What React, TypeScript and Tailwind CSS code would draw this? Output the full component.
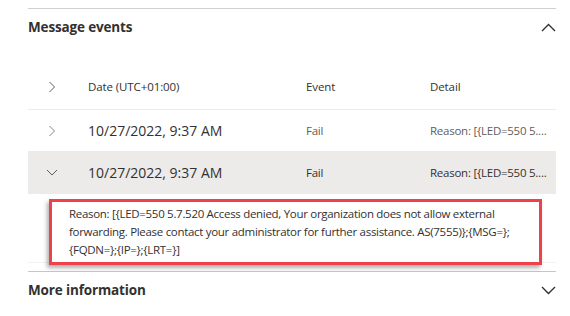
import React from 'react';

const font = { fontFamily: '"Open Sans", "Noto Sans", sans-serif' };

const ChevronRight = ({ className }: { className?: string }) => (
    <svg width="8" height="12" viewBox="0 0 8 12" className={className}>
        <polyline points="1.5,1 6.5,6 1.5,11" fill="none" stroke="currentColor" strokeWidth="1" />
    </svg>
);

const ChevronDown = ({ className }: { className?: string }) => (
    <svg width="12" height="7" viewBox="0 0 12 7" className={className}>
        <polyline points="1,1 6,6 11,1" fill="none" stroke="currentColor" strokeWidth="1" />
    </svg>
);

const BigChevron = ({ up }: { up?: boolean }) => (
    <svg width="15" height="9" viewBox="0 0 15 9" className="text-[#323130]">
        <polyline
            points={up ? '1,8 7.5,1.5 14,8' : '1,1 7.5,7.5 14,1'}
            fill="none"
            stroke="currentColor"
            strokeWidth="1.4"
        />
    </svg>
);

const App: React.FC = () => {
    return (
        <div className="w-[570px] h-[316px] bg-white overflow-hidden pt-2 pl-7 pr-[14px]" style={font}>
            {/* Message events section */}
            <div className="border-t border-[#d2d0ce]">
                <div className="h-[37px] flex items-center justify-between">
                    <h2 className="text-[13.5px] font-bold text-[#323130] tracking-[-0.15px]">Message events</h2>
                    <BigChevron up />
                </div>

                <div className="mt-[19px]">
                    {/* header */}
                    <div className="h-[45px] flex items-center border-b border-[#edebe9] text-[11.5px] tracking-[-0.1px] text-[#323130]">
                        <div className="w-[60px] pl-[20px] text-[#605e5c]">
                            <ChevronRight className="block" />
                        </div>
                        <div className="w-[218px]">Date (UTC+01:00)</div>
                        <div className="w-[124px]">Event</div>
                        <div>Detail</div>
                    </div>

                    {/* row 1 */}
                    <div className="h-[41px] flex items-center text-[#323130]">
                        <div className="w-[60px] pl-[20px] pt-[1px] text-[#8a8886]">
                            <ChevronRight className="block" />
                        </div>
                        <div className="w-[218px] text-[14px]">10/27/2022, 9:37 AM</div>
                        <div className="w-[124px] text-[11.5px] tracking-[-0.25px] text-[#605e5c]">Fail</div>
                        <div className="text-[11.5px] tracking-[-0.25px] text-[#605e5c]">Reason: [{'{'}LED=550 5....</div>
                    </div>

                    {/* row 2 expanded */}
                    <div className="h-[43px] flex items-center bg-[#edebe9] text-[#323130]">
                        <div className="w-[60px] pl-[18px] text-[#605e5c]">
                            <ChevronDown className="block" />
                        </div>
                        <div className="w-[218px] text-[14px]">10/27/2022, 9:37 AM</div>
                        <div className="w-[124px] text-[11.5px] tracking-[-0.25px]">Fail</div>
                        <div className="text-[11.5px] tracking-[-0.25px]">Reason: [{'{'}LED=550 5....</div>
                    </div>

                    {/* detail */}
                    <div className="h-[69px] pt-[5px] border-b border-[#f3f2f1]">
                        <div className="relative ml-[21px] mr-[14px] h-[66px] border-[3px] border-[#ef4149] bg-white shadow-[-2px_3px_4px_rgba(0,0,0,0.3)] pl-[17px] pr-[2px] pt-[3px] text-[11.5px] leading-[18px] tracking-[-0.3px] text-[#323130]">
                            Reason: [{'{'}LED=550 5.7.520 Access denied, Your organization does not allow external forwarding. Please contact your administrator for further assistance. AS(7555){'}'};{'{'}MSG={'}'};{'{'}FQDN={'}'};{'{'}IP={'}'};{'{'}LRT={'}'}]
                        </div>
                    </div>
                </div>
            </div>

            {/* More information section */}
            <div className="mt-[8px] border-t border-[#c8c6c4]">
                <div className="h-[36px] flex items-center justify-between">
                    <h2 className="text-[13.5px] font-bold text-[#323130] tracking-[-0.15px]">More information</h2>
                    <BigChevron />
                </div>
            </div>
        </div>
    );
};

export default App;
